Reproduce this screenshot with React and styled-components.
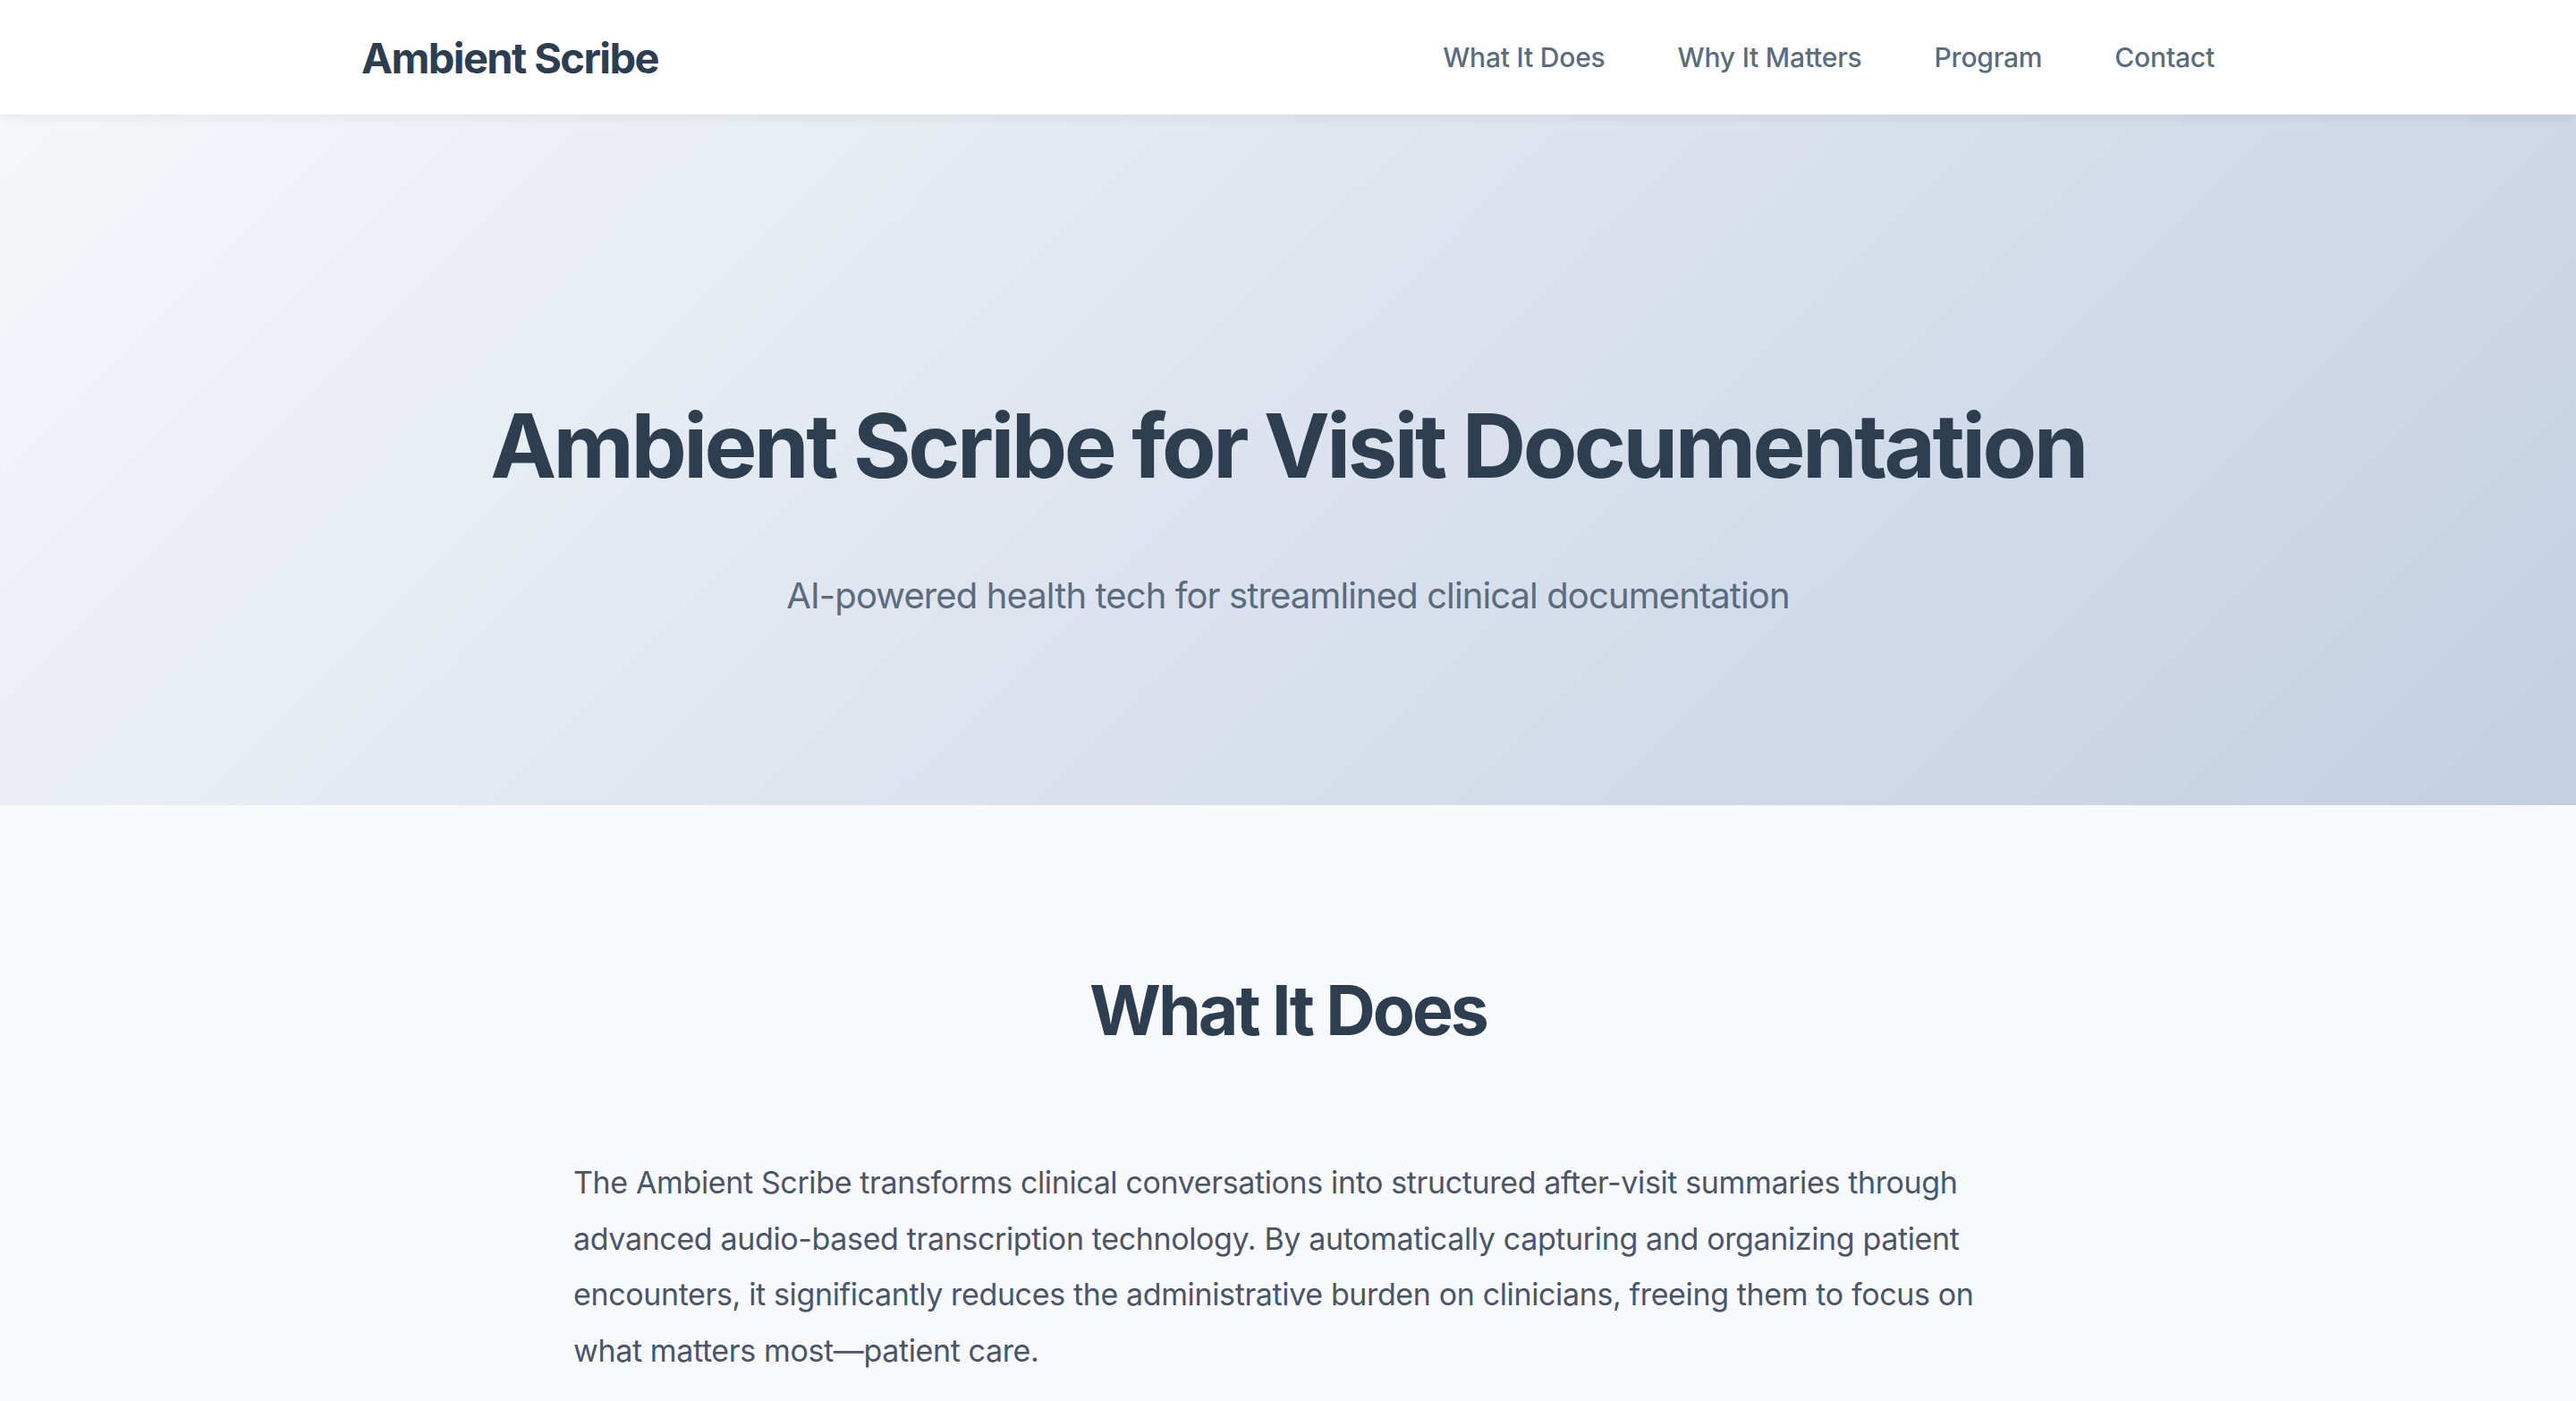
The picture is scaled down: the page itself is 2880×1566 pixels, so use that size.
import React from "react";
import styled, { createGlobalStyle } from "styled-components";

const GlobalStyle = createGlobalStyle`
  * { box-sizing: border-box; }
  html, body { margin: 0; padding: 0; }
  body {
    background: #f8f9fa;
    font-family: Inter, "Noto Sans", "Liberation Sans", sans-serif;
    color: #2c3e50;
    -webkit-font-smoothing: antialiased;
  }
`;

const Header = styled.header`
  position: relative;
  z-index: 2;
  height: 128px;
  background: #ffffff;
  box-shadow: 0 4px 12px rgba(0, 0, 0, 0.06);
`;

const HeaderInner = styled.div`
  max-width: 2072px;
  height: 100%;
  margin: 0 auto;
  display: flex;
  align-items: center;
  justify-content: space-between;
`;

const Logo = styled.div`
  font-size: 47px;
  font-weight: 700;
  letter-spacing: -1.6px;
  color: #2c3e50;
`;

const Nav = styled.nav`
  display: flex;
  gap: 81px;
`;

const NavLink = styled.a`
  font-size: 30px;
  font-weight: 500;
  color: #5a6c7d;
  text-decoration: none;
  letter-spacing: -0.2px;
`;

const Hero = styled.section`
  height: 772px;
  background: linear-gradient(135deg, #f5f7fa 0%, #c3cfe2 100%);
  display: flex;
  flex-direction: column;
  align-items: center;
  padding-top: 311px;
`;

const HeroTitle = styled.h1`
  margin: 0;
  font-size: 99px;
  line-height: 1.2;
  font-weight: 700;
  letter-spacing: -3.5px;
  color: #2c3e50;
`;

const HeroSubtitle = styled.p`
  margin: 83px 0 0;
  font-size: 40px;
  font-weight: 400;
  letter-spacing: -0.9px;
  color: #5a6c7d;
`;

const Section = styled.section`
  padding: 183px 0 80px;
  display: flex;
  flex-direction: column;
  align-items: center;
`;

const SectionTitle = styled.h2`
  margin: 0;
  font-size: 77px;
  line-height: 1.2;
  font-weight: 700;
  letter-spacing: -3px;
  color: #2c3e50;
`;

const Body = styled.p`
  margin: 116px 0 0;
  width: 1598px;
  font-size: 34px;
  line-height: 62.4px;
  color: #4a5568;
  letter-spacing: -0.37px;
`;

export default function App() {
  return (
    <>
      <GlobalStyle />
      <Header>
        <HeaderInner>
          <Logo>Ambient Scribe</Logo>
          <Nav>
            <NavLink href="#what">What It Does</NavLink>
            <NavLink href="#why">Why It Matters</NavLink>
            <NavLink href="#program">Program</NavLink>
            <NavLink href="#contact">Contact</NavLink>
          </Nav>
        </HeaderInner>
      </Header>
      <Hero>
        <HeroTitle>Ambient Scribe for Visit Documentation</HeroTitle>
        <HeroSubtitle>AI-powered health tech for streamlined clinical documentation</HeroSubtitle>
      </Hero>
      <Section id="what">
        <SectionTitle>What It Does</SectionTitle>
        <Body>
          The Ambient Scribe transforms clinical conversations into structured after-visit summaries through
          advanced audio-based transcription technology. By automatically capturing and organizing patient
          encounters, it significantly reduces the administrative burden on clinicians, freeing them to focus on
          what matters most—patient care.
        </Body>
      </Section>
    </>
  );
}
